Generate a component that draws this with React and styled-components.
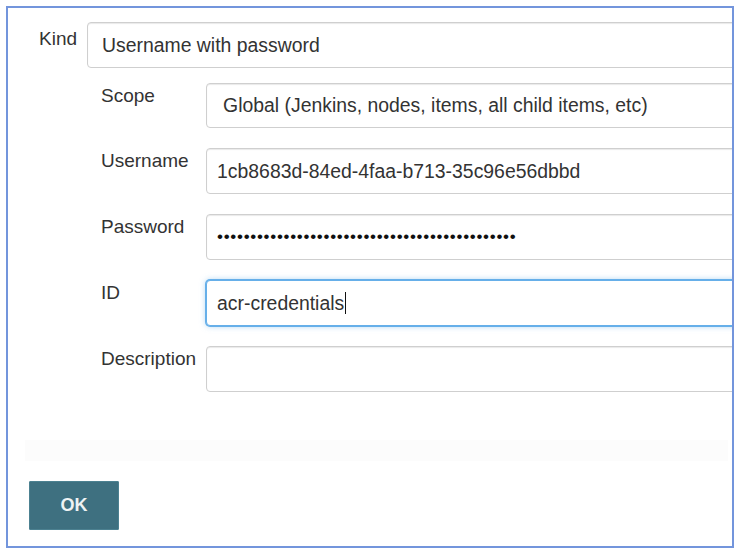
import React from "react";
import styled, { createGlobalStyle } from "styled-components";

const GlobalStyle = createGlobalStyle`
  html, body {
    margin: 0;
    background: #ffffff;
  }
  body {
    font-family: "Liberation Sans", Arial, sans-serif;
  }
`;

const Page = styled.div`
  width: 740px;
  height: 554px;
  padding: 6px 0 0 6px;
  box-sizing: border-box;
`;

const Frame = styled.div`
  width: 728px;
  height: 542px;
  box-sizing: border-box;
  border: 2px solid #7395dc;
  overflow: hidden;
  padding: 14px 0 0 21px;
  display: flex;
  flex-direction: column;
`;

const Form = styled.div`
  padding-left: 10px;
`;

const Row = styled.div`
  display: grid;
  grid-template-columns: auto 1fr;
  column-gap: 10px;
  align-items: start;
`;

const Nested = styled.div`
  margin: 15px 0 0 62px;
  display: grid;
  grid-template-columns: auto 1fr;
  column-gap: 10px;
  row-gap: 20px;
  align-items: start;
`;

const Label = styled.div`
  font-size: 19px;
  line-height: 23px;
  color: #333;
  padding-top: ${(p) => p.$top || 1}px;
  white-space: nowrap;
`;

const Field = styled.div`
  height: ${(p) => p.$h || 46}px;
  box-sizing: border-box;
  margin-right: -40px;
  display: flex;
  align-items: center;
  padding-left: ${(p) => p.$pad || 10}px;
  font-size: 19.4px;
  color: #333;
  background: #fff;
  border: 1px solid ${(p) => (p.$focus ? "#66afe9" : "#cfcfcf")};
  border-radius: 4px;
  box-shadow: ${(p) =>
    p.$focus
      ? "0 0 0 1px #66afe9, 0 0 6px rgba(102,175,233,.6)"
      : "inset 0 1px 1px rgba(0,0,0,.09)"};
  white-space: nowrap;
`;

const Dots = styled.span`
  font-size: 17px;
  letter-spacing: 0.7px;
  color: #111;
`;

const Caret = styled.span`
  display: inline-block;
  width: 1px;
  height: 22px;
  background: #111;
  margin-left: 1px;
`;

const Band = styled.div`
  margin: 48px 4px 0 -4px;
  height: 21px;
  background: #fcfcfc;
`;

const OkButton = styled.button`
  margin-top: 20px;
  width: 90px;
  height: 49px;
  background: #3e7080;
  border: 1px solid #4c8191;
  border-radius: 1px;
  color: #eef3f4;
  font-family: "Liberation Sans", Arial, sans-serif;
  font-weight: bold;
  font-size: 18px;
  padding: 0;
`;

export default function App() {
  const dots = "•".repeat(45);
  return (
    <>
      <GlobalStyle />
      <Page>
        <Frame>
          <Form>
            <Row>
              <Label $top={5}>Kind</Label>
              <Field $pad={14}>Username with password</Field>
            </Row>
            <Nested>
              <Label>Scope</Label>
              <Field $pad={16} $h={45}>
                Global (Jenkins, nodes, items, all child items, etc)
              </Field>

              <Label>Username</Label>
              <Field>1cb8683d-84ed-4faa-b713-35c96e56dbbd</Field>

              <Label>Password</Label>
              <Field>
                <Dots>{dots}</Dots>
              </Field>

              <Label>ID</Label>
              <Field $focus>
                acr-credentials
                <Caret />
              </Field>

              <Label>Description</Label>
              <Field />
            </Nested>
          </Form>
          <Band />
          <div>
            <OkButton>OK</OkButton>
          </div>
        </Frame>
      </Page>
    </>
  );
}
